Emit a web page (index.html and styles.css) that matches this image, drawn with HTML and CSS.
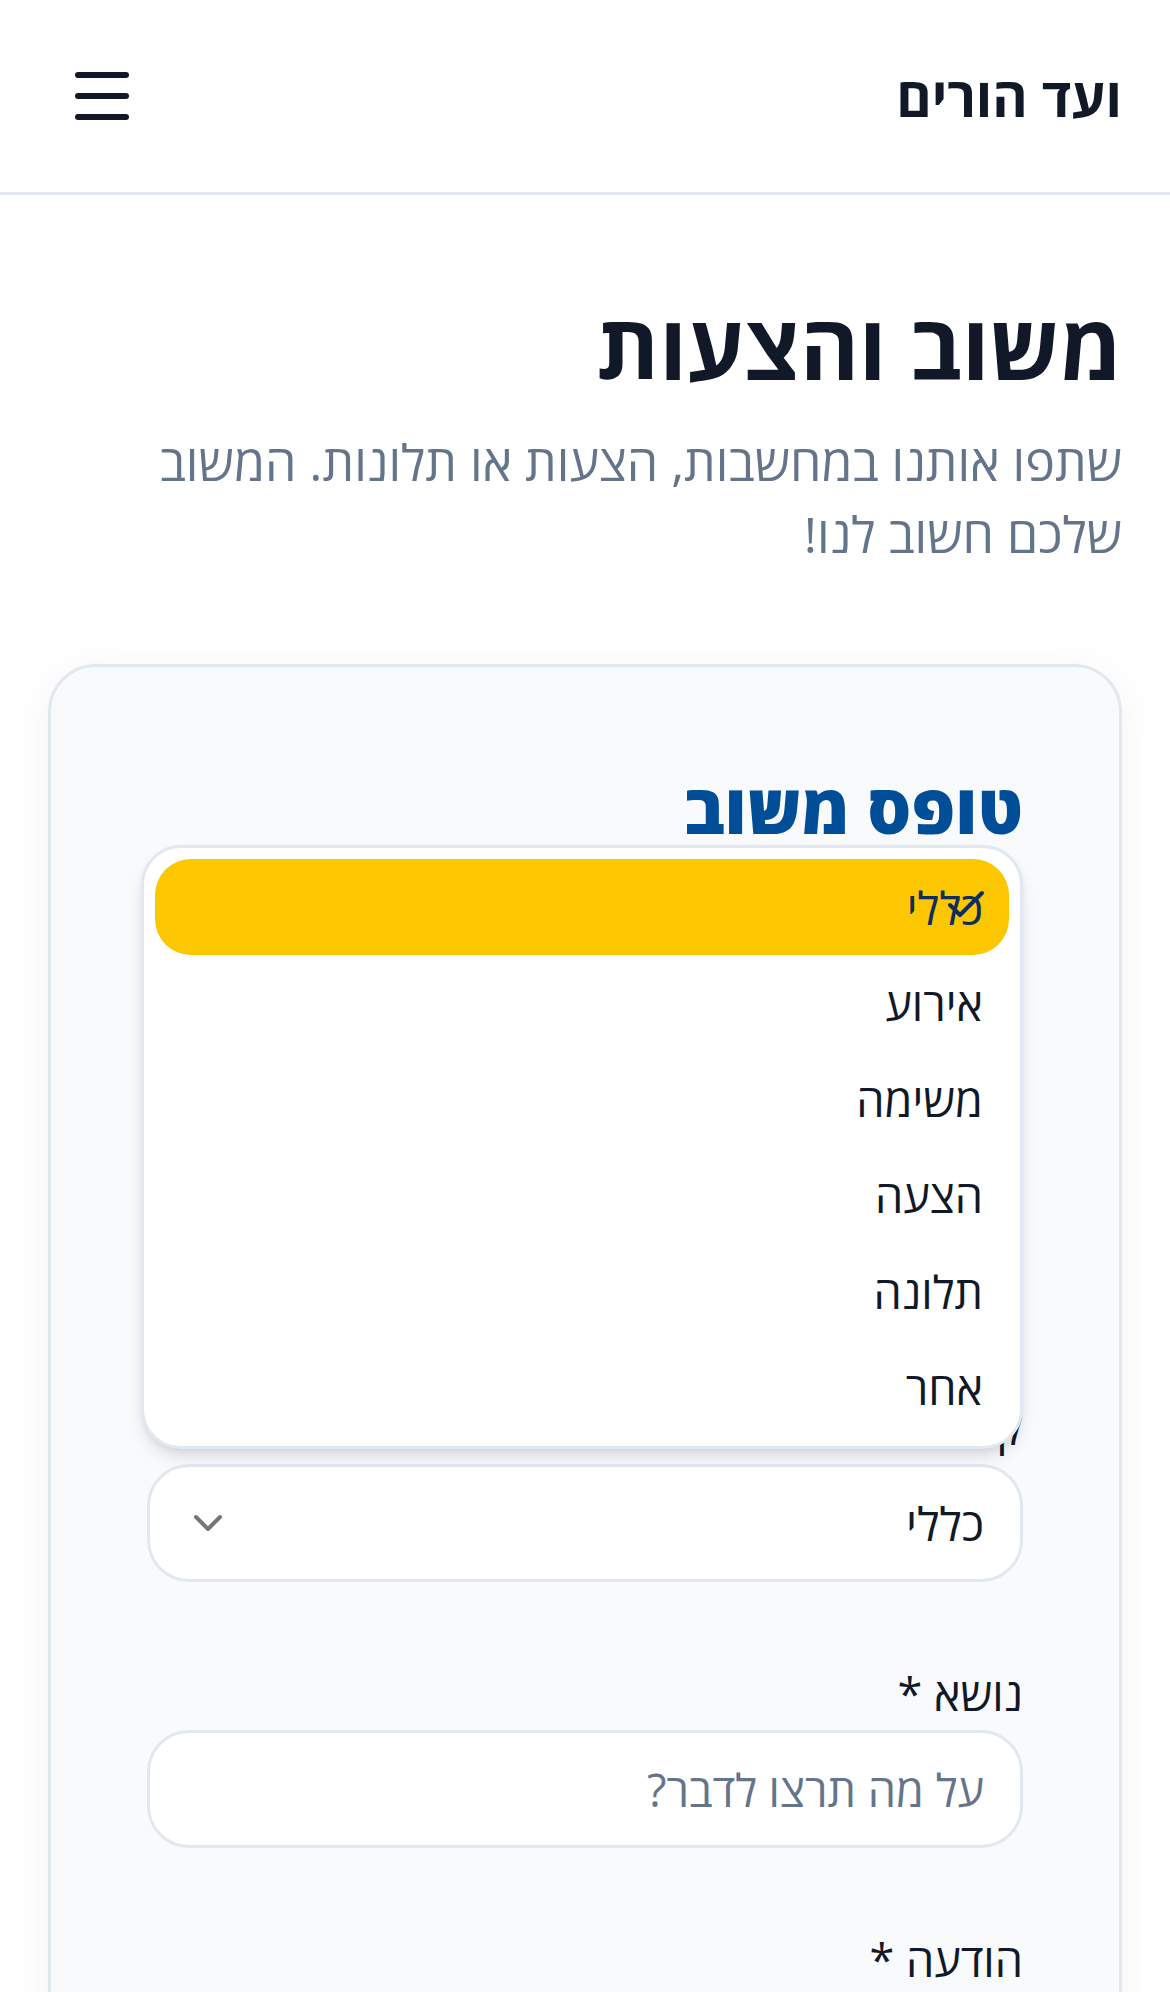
FILE: index.html
```html
<!DOCTYPE html>
<html lang="he" dir="rtl">
<head>
<meta charset="utf-8">
<title>משוב והצעות - ועד הורים</title>
<link rel="stylesheet" href="styles.css">
</head>
<body>
<div class="app">
  <header class="topbar">
    <div class="brand">ועד הורים</div>
    <button class="menu-btn" aria-label="תפריט">
      <svg width="60" height="48" viewBox="0 0 60 48" fill="none" stroke="#111827" stroke-width="6" stroke-linecap="round">
        <line x1="6" y1="3" x2="54" y2="3"/>
        <line x1="6" y1="24" x2="54" y2="24"/>
        <line x1="6" y1="45" x2="54" y2="45"/>
      </svg>
    </button>
  </header>

  <main class="content">
    <h1 class="page-title">משוב והצעות</h1>
    <p class="page-sub">שתפו אותנו במחשבות, הצעות או תלונות. המשוב שלכם חשוב לנו!</p>

    <section class="card">
      <h2 class="card-title">טופס משוב</h2>

      <div class="field">
        <label class="label">קטגוריה *</label>
        <div class="select-wrap">
          <div class="input select">
            <span>כללי</span>
            <svg class="chevron" width="48" height="48" viewBox="0 0 24 24" fill="none" stroke="#767676" stroke-width="2" stroke-linecap="round" stroke-linejoin="round"><path d="m6 9 6 6 6-6"/></svg>
          </div>
          <ul class="listbox">
            <li class="option active">
              <span>כללי</span>
              <svg class="check" width="48" height="48" viewBox="0 0 24 24" fill="none" stroke="#0f2d5c" stroke-width="2" stroke-linecap="round" stroke-linejoin="round"><path d="M20 6 9 17l-5-5"/></svg>
            </li>
            <li class="option">אירוע</li>
            <li class="option">משימה</li>
            <li class="option">הצעה</li>
            <li class="option">תלונה</li>
            <li class="option">אחר</li>
          </ul>
        </div>
      </div>

      <div class="field">
        <label class="label">נושא *</label>
        <div class="input placeholder">על מה תרצו לדבר?</div>
      </div>

      <div class="field">
        <label class="label">הודעה *</label>
        <div class="input textarea placeholder">כתבו כאן את ההודעה שלכם...</div>
      </div>
    </section>
  </main>
</div>
</body>
</html>
```

FILE: styles.css
```css
* { box-sizing: border-box; }

html, body {
  margin: 0;
  padding: 0;
  background: #ffffff;
  font-family: "Open Sans", "Liberation Sans", sans-serif;
  color: #111827;
}

.app {
  height: 100vh;
  overflow: hidden;
  display: flex;
  flex-direction: column;
}

.topbar {
  flex: none;
  height: 195px;
  padding: 0 48px;
  display: flex;
  align-items: center;
  justify-content: space-between;
  border-bottom: 3px solid #e2e8f0;
  background: #ffffff;
}

.brand {
  font-size: 54px;
  font-weight: 700;
  line-height: 1;
  color: #111827;
}

.menu-btn {
  border: 0;
  background: transparent;
  padding: 24px;
  margin: 0;
  display: flex;
  cursor: pointer;
}
.menu-btn svg { display: block; }

.content {
  padding: 96px 48px 0;
}

.page-title {
  margin: 0 0 27px;
  font-size: 90px;
  line-height: 108px;
  font-weight: 700;
  color: #111827;
}

.page-sub {
  margin: 0;
  max-width: 1000px;
  font-size: 50px;
  line-height: 72px;
  color: #64748b;
}

.card {
  margin-top: 94px;
  background: #f8fafc;
  border: 3px solid #e2e8f0;
  border-radius: 48px;
  padding: 96px;
  box-shadow: 0 6px 40px rgba(15, 23, 42, 0.05);
}

.card-title {
  margin: 0 0 541px;
  font-size: 69px;
  line-height: 88px;
  font-weight: 800;
  color: #004e98;
}

.field {
  margin-bottom: 76px;
}

.label {
  display: block;
  font-size: 45px;
  line-height: 72px;
  font-weight: 500;
  color: #111827;
  margin-bottom: 0;
}

.input {
  height: 118px;
  background: #ffffff;
  border: 3px solid #e2e8f0;
  border-radius: 42px;
  padding: 0 36px;
  display: flex;
  align-items: center;
  font-size: 45px;
  color: #111827;
}
.placeholder { color: #64748b; }

.textarea {
  height: 360px;
  align-items: flex-start;
  padding-top: 30px;
}

.select-wrap { position: relative; }

.select {
  justify-content: space-between;
  font-size: 46px;
  color: #111827;
}
.select .chevron { display: block; margin-left: -2px; }

.listbox {
  position: absolute;
  z-index: 10;
  left: -6px;
  right: 0;
  bottom: calc(100% + 15px);
  margin: 0;
  padding: 11px;
  list-style: none;
  background: #ffffff;
  border: 3px solid #e2e8f0;
  border-radius: 40px;
  box-shadow: 0 10px 18px -4px rgba(15, 23, 42, 0.14), 0 4px 8px -4px rgba(15, 23, 42, 0.1);
}

.option {
  position: relative;
  height: 96px;
  display: flex;
  align-items: center;
  padding: 0 26px;
  border-radius: 36px;
  font-size: 45px;
  color: #111827;
}

.option.active {
  background: #fcc600;
  color: #0f2d5c;
}

.option .check {
  position: absolute;
  right: 19px;
  top: 22px;
  display: block;
}
```
